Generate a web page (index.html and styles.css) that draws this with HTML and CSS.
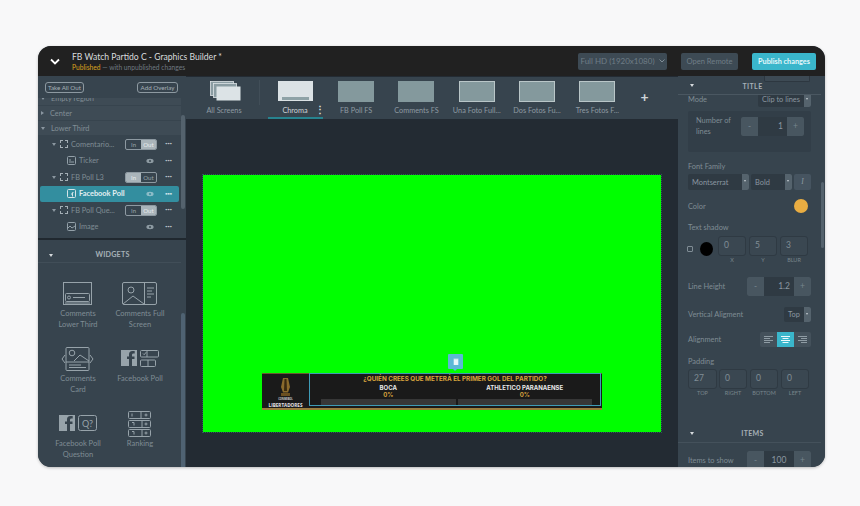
FILE: index.html
```html
<!DOCTYPE html>
<html lang="en">
<head>
<meta charset="utf-8">
<title>FB Watch Partido C - Graphics Builder</title>
<link rel="stylesheet" href="styles.css">
</head>
<body>
<div class="app">
  <header class="topbar">
    <svg class="chev" width="10" height="7" viewBox="0 0 10 7"><path d="M1 1.500l4 4 4-4" fill="none" stroke="#fff" stroke-width="1.800"/></svg>
    <div class="titles">
      <div class="doc-title">FB Watch Partido C - Graphics Builder *</div>
      <div class="doc-status"><b>Published</b> — with unpublished changes</div>
    </div>
    <div class="top-btn res">Full HD (1920x1080) <svg width="6" height="4" viewBox="0 0 6 4"><path d="M.5.5L3 3 5.500.5" fill="none" stroke="#7f8c95"/></svg></div>
    <div class="top-btn remote">Open Remote</div>
    <div class="top-btn publish">Publish changes</div>
  </header>
  <div class="main">
    <aside class="left">
      <div class="left-actions">
        <span class="ghost take">Take All Out</span>
        <span class="ghost add">Add Overlay</span>
      </div>
      <div class="tree-wrap">
        <div class="tree">
          <div class="region clipped"><i class="tri down"></i>Empty region</div>
          <div class="region"><i class="tri side"></i>Center</div>
          <div class="region"><i class="tri down"></i>Lower Third</div>
          <div class="row group"><i class="tri down"></i><i class="dash"></i><span class="name">Comentario...</span><span class="io"><span>In</span><span class="on">Out</span></span><span class="dots">•••</span></div>
          <div class="row child"><svg class="ico" width="9" height="9" viewBox="0 0 9 9"><rect x=".5" y=".5" width="8" height="8" rx="1" fill="none" stroke="#93a0a8"/><path d="M2 6h5M2 4h2" stroke="#93a0a8"/></svg><span class="name">Ticker</span><svg class="eye" width="8" height="6" viewBox="0 0 8 6"><ellipse cx="4" cy="3" rx="3.600" ry="2.200" fill="#8d9aa2"/><circle cx="4" cy="3" r="1" fill="#37444e"/></svg><span class="dots">•••</span></div>
          <div class="row group"><i class="tri down"></i><i class="dash"></i><span class="name">FB Poll L3</span><span class="io"><span class="on">In</span><span>Out</span></span><span class="dots">•••</span></div>
          <div class="row child selected"><svg class="ico" width="9" height="9" viewBox="0 0 9 9"><rect x=".5" y=".5" width="8" height="8" rx="1" fill="none" stroke="#d5e4e8"/><path d="M5.500 7.500V3.500h1M4 5h2" stroke="#d5e4e8" fill="none"/></svg><span class="name">Facebook Poll</span><svg class="eye" width="8" height="6" viewBox="0 0 8 6"><ellipse cx="4" cy="3" rx="3.600" ry="2.200" fill="#8cbcc8"/><circle cx="4" cy="3" r="1" fill="#338e9f"/></svg><span class="dots">•••</span></div>
          <div class="row group"><i class="tri down"></i><i class="dash"></i><span class="name">FB Poll Que...</span><span class="io"><span>In</span><span class="on">Out</span></span><span class="dots">•••</span></div>
          <div class="row child"><svg class="ico" width="9" height="9" viewBox="0 0 9 9"><rect x=".5" y=".5" width="8" height="8" rx="1" fill="none" stroke="#93a0a8"/><path d="M1 6l2-2 2 2 3-2" stroke="#93a0a8" fill="none"/></svg><span class="name">Image</span><svg class="eye" width="8" height="6" viewBox="0 0 8 6"><ellipse cx="4" cy="3" rx="3.600" ry="2.200" fill="#8d9aa2"/><circle cx="4" cy="3" r="1" fill="#37444e"/></svg><span class="dots">•••</span></div>
        </div>
        <div class="scroll tree-scroll"></div>
      </div>
      <div class="widgets">
        <div class="widgets-head"><i class="tri down white"></i><span>WIDGETS</span></div>
        <div class="widget-grid">
          <div class="widget">
            <svg width="30" height="24" viewBox="0 0 30 24" fill="none" stroke="#97a3aa"><rect x=".5" y=".5" width="28" height="22"/><rect x="2.500" y="11.500" width="24" height="8" rx="1"/><circle cx="6" cy="15.500" r="1.500"/><path d="M10 15.500h12M2 21h25"/></svg>
            <span>Comments<br>Lower Third</span>
          </div>
          <div class="widget">
            <svg width="36" height="24" viewBox="0 0 36 24" fill="none" stroke="#97a3aa"><rect x=".5" y=".5" width="34" height="22" rx="1.500"/><path d="M22.500.5v22M1 22l10-8 11 8M25 6h7M25 9h5M25 12h7M25 15h4"/><circle cx="9" cy="8" r="3"/></svg>
            <span>Comments Full<br>Screen</span>
          </div>
          <div class="widget">
            <svg width="36" height="24" viewBox="0 0 36 24" fill="none" stroke="#97a3aa"><rect x="6" y=".5" width="23" height="23" rx="1"/><circle cx="12" cy="6" r="2.800"/><path d="M14 14l6-6 9 6M6 15h23M9 18h12M9 20.500h17M5 8l-3 4 3 4M30 8l3 4-3 4"/></svg>
            <span>Comments<br>Card</span>
          </div>
          <div class="widget">
            <svg width="38" height="18" viewBox="0 0 38 18" fill="none" stroke="#97a3aa"><rect width="16" height="16" fill="#97a3aa" stroke="none"/><path d="M11 16V9h2.500V6.500H11V5c0-1 .5-1.500 1.500-1.500h1.200V1H11.500C9 1 8 2.500 8 4.500v2H6V9h2v7z" fill="#37444e" stroke="none"/><rect x="19.500" y=".5" width="18" height="6.500" rx="1"/><rect x="19.500" y="10" width="15" height="6.500" rx="1"/><path d="M26 .5v6.500M27 10v6.500M22 3.500l1.200 1.200 2-2.500"/></svg>
            <span>Facebook Poll</span>
          </div>
          <div class="widget">
            <svg width="38" height="18" viewBox="0 0 38 18" fill="none" stroke="#97a3aa"><rect width="16" height="16" fill="#97a3aa" stroke="none"/><path d="M11 16V9h2.500V6.500H11V5c0-1 .5-1.500 1.500-1.500h1.200V1H11.500C9 1 8 2.500 8 4.500v2H6V9h2v7z" fill="#37444e" stroke="none"/><rect x="19.500" y=".5" width="18" height="15" rx="2"/><text x="28.500" y="12" class="q">Q?</text></svg>
            <span>Facebook Poll<br>Question</span>
          </div>
          <div class="widget">
            <svg width="24" height="26" viewBox="0 0 24 26" fill="none" stroke="#97a3aa"><rect x=".5" y=".5" width="22" height="7" rx="1"/><rect x=".5" y="9.500" width="22" height="7" rx="1"/><rect x=".5" y="18.500" width="22" height="7" rx="1"/><path d="M13 .5v7M14 9.500v7M14 18.500v7M4 2.500v3M4 11.500h2v3M4 20.500h2v3"/><circle cx="18" cy="4" r="1"/><circle cx="18" cy="13" r="1"/><circle cx="18" cy="22" r="1"/></svg>
            <span>Ranking</span>
          </div>
        </div>
        <div class="scroll widgets-scroll"></div>
      </div>
    </aside>

    <section class="center">
      <nav class="tabs">
        <div class="tab all">
          <svg width="31" height="20" viewBox="0 0 31 20"><rect x=".5" y=".5" width="23" height="14" fill="#8a9ca2" stroke="#dce3e6" stroke-width=".8"/><rect x="3.500" y="2.500" width="23" height="14" fill="#8a9ca2" stroke="#dce3e6" stroke-width=".8"/><rect x="6.500" y="5.500" width="24" height="14" fill="#dce3e6"/></svg>
          <span>All Screens</span>
        </div>
        <i class="tab-sep"></i>
        <div class="tab active">
          <div class="thumb light"><i></i></div>
          <span>Chroma</span><em>⋮</em>
        </div>
        <div class="tab"><div class="thumb"></div><span>FB Poll FS</span></div>
        <div class="tab"><div class="thumb"></div><span>Comments FS</span></div>
        <div class="tab"><div class="thumb framed"></div><span>Una Foto Full...</span></div>
        <div class="tab"><div class="thumb framed"></div><span>Dos Fotos Fu...</span></div>
        <div class="tab"><div class="thumb framed"></div><span>Tres Fotos F...</span></div>
        <div class="plus">+</div>
      </nav>
      <div class="canvas">
        <div class="stage">
          <div class="trash"><svg width="6" height="7" viewBox="0 0 6 7"><path d="M.5 1h5M1 1.500h4V7H1z" fill="#e8f6fa" stroke="#e8f6fa" stroke-width=".6"/></svg></div>
          <div class="poll">
            <div class="poll-logo">
              <svg width="13" height="18" viewBox="0 0 13 18"><path d="M4 0h5l2 9-2 5.500H4L2 9z" fill="#8a6a2c"/><path d="M5.500 1h2L8 13H5z" fill="#3a2a10"/><path d="M2 15h9v3H2z" fill="#6b4f20"/></svg>
              <small>CONMEBOL</small>
              <strong>LIBERTADORES</strong>
            </div>
            <div class="poll-body">
              <div class="poll-q">¿QUIÉN CREES QUE METERÁ EL PRIMER GOL DEL PARTIDO?</div>
              <div class="poll-opts">
                <div class="opt"><b>BOCA</b><u>0%</u><i></i></div>
                <div class="opt"><b>ATHLETICO PARANAENSE</b><u>0%</u><i></i></div>
              </div>
            </div>
          </div>
        </div>
      </div>
    </section>

    <aside class="inspector">
      <div class="prop-head"><i class="stub"></i><i class="tri down white"></i><span>TITLE</span></div>
      <div class="props">
        <div class="line mode"><label>Mode</label><span class="select clip">Clip to lines<i></i></span></div>
        <div class="lines-box">
          <label>Number of<br>lines</label>
          <div class="stepper small"><span>-</span><b>1</b><span>+</span></div>
        </div>
        <label class="block ff">Font Family</label>
        <div class="font-row">
          <span class="select font">Montserrat<i></i></span>
          <span class="select weight">Bold<i></i></span>
          <span class="italic">I</span>
        </div>
        <div class="line color"><label>Color</label><i class="swatch"></i></div>
        <label class="block ts">Text shadow</label>
        <div class="shadow-row">
          <i class="check"></i><i class="black"></i>
          <div class="field"><b>0</b><small>X</small></div>
          <div class="field"><b>5</b><small>Y</small></div>
          <div class="field"><b>3</b><small>BLUR</small></div>
        </div>
        <div class="line lh"><label>Line Height</label><div class="stepper"><span>-</span><b>1.2</b><span>+</span></div></div>
        <div class="line va"><label>Vertical Aligment</label><span class="select top">Top<i></i></span></div>
        <div class="line al"><label>Alignment</label>
          <div class="aligns">
            <span><svg width="9" height="7" viewBox="0 0 9 7"><path d="M0 .5h9M0 2.500h6M0 4.500h9M0 6.500h6" stroke="#8f9ca4"/></svg></span>
            <span class="on"><svg width="9" height="7" viewBox="0 0 9 7"><path d="M0 .5h9M1.500 2.500h6M0 4.500h9M1.500 6.500h6" stroke="#eafafd"/></svg></span>
            <span><svg width="9" height="7" viewBox="0 0 9 7"><path d="M0 .5h9M3 2.500h6M0 4.500h9M3 6.500h6" stroke="#8f9ca4"/></svg></span>
          </div>
        </div>
        <label class="block pad">Padding</label>
        <div class="pad-row">
          <div class="field"><b>27</b><small>TOP</small></div>
          <div class="field"><b>0</b><small>RIGHT</small></div>
          <div class="field"><b>0</b><small>BOTTOM</small></div>
          <div class="field"><b>0</b><small>LEFT</small></div>
        </div>
        <div class="section-head"><i class="tri down white"></i><span>ITEMS</span></div>
        <div class="line items"><label>Items to show</label><div class="stepper"><span>-</span><b class="c">100</b><span>+</span></div></div>
      </div>
      <div class="scroll right-scroll"></div>
    </aside>
  </div>
</div>
</body>
</html>
```
FILE: styles.css
```css
* { box-sizing: border-box; }
html, body { margin: 0; height: 100%; }
body {
  background: #f8f8f9;
  padding: 46px 35px 39px 38px;
  font-family: Lato, "Open Sans", sans-serif;
  color: #8a969e;
  font-size: 7.400px;
  overflow: hidden;
}
i, em { display: block; font-style: normal; }
label { display: block; }

.app {
  width: 787px; height: 421px;
  border-radius: 13px; overflow: hidden;
  display: flex; flex-direction: column;
  background: #37444e;
  box-shadow: 0 1px 3px rgba(0,0,0,.25);
}

.topbar {
  height: 30px; flex: none;
  background: #212121;
  display: flex; align-items: center;
  padding: 0 9px 0 12px;
}
.chev { margin-right: 12px; }
.titles { flex: 1; }
.doc-title { color: #d9dcde; font-size: 8.600px; line-height: 11px; }
.doc-status { color: #6f7a82; font-size: 6.700px; line-height: 8px; }
.doc-status b { color: #d9a21f; font-weight: 400; }
.top-btn {
  height: 17px; border-radius: 2px;
  font-size: 8px; line-height: 17px; text-align: center;
  background: #3d4a54; color: #6f7d86;
}
.res { width: 89px; margin-right: 14px; }
.res svg { margin-left: 2px; vertical-align: 1px; }
.remote { width: 57px; margin-right: 14px; font-size: 7.600px; }
.publish { width: 64px; background: #3ab6cb; color: #e6f8fb; font-weight: 700; font-size: 7.300px; }

.main { flex: 1; min-height: 0; display: flex; }

/* left */
.left { width: 148px; flex: none; display: flex; flex-direction: column; background: #37444e; }
.left-actions { height: 22px; display: flex; justify-content: space-between; align-items: center; padding: 1px 8px 0 7px; flex: none; }
.ghost {
  border: 1px solid #8d99a1; border-radius: 3px;
  height: 11px; line-height: 9px; text-align: center;
  font-size: 6.200px; color: #a7b1b7;
}
.take { width: 39px; }
.add { width: 41px; }
.tree-wrap {
  height: 142px; flex: none; position: relative; overflow: hidden;
  border-bottom: 2px solid #20282f;
}
.tree { width: 143px; }
.region {
  height: 15px; padding-left: 3px;
  background: #3e4b55; border-bottom: 1px solid #37444e;
  display: flex; align-items: center; font-size: 7.400px; color: #818e96;
}
.region.clipped { margin-top: -7px; }
.tri { width: 0; height: 0; margin-right: 7px; flex: none; }
.tri.down { border: 2.500px solid transparent; border-top: 3px solid #8a96a0; border-bottom: 0; }
.tri.side { border: 2.500px solid transparent; border-left: 3px solid #8a96a0; border-right: 0; }
.tri.white { border-top-color: #d5dadd; }
.region .tri { margin-right: 6px; }
.row { display: flex; align-items: center; font-size: 7.400px; color: #7f8c94; height: 16.500px; }
.row.group { padding-left: 14px; }
.row.group .tri { margin-right: 4px; }
.row.child { padding-left: 27px; margin: 0 2px; border-radius: 2px; }
.row .name { flex: 1; white-space: nowrap; }
.row.child .name { margin-left: 3px; }
.dash { width: 8px; height: 8px; border: 1px dashed #a4afb6; margin-right: 3px; flex: none; }
.io {
  display: flex; width: 32px; height: 11px; border: 1px solid #8d99a1; border-radius: 2px;
  font-size: 6px; line-height: 9px; text-align: center; overflow: hidden; margin-right: 8px; color: #9aa6ad;
}
.io span { flex: 1; }
.io .on { background: #a9b4ba; color: #e8ecee; }
.dots { font-size: 4.500px; color: #b6bfc4; letter-spacing: -.4px; width: 9px; margin-right: 7px; line-height: 6px; }
.row.child .dots { margin-right: 5px; }
.eye { margin-right: 11px; }
.row.selected { background: #338e9f; color: #e3f0f3; font-weight: 700; }
.row.selected .dots { color: #cfe4ea; }
.ico { flex: none; }
.scroll { position: absolute; background: #54626d; border-radius: 2px; width: 4px; }
.tree-scroll { right: 1px; top: 17px; height: 94px; }

.widgets { flex: 1; min-height: 0; position: relative; overflow: hidden; padding-top: 10px; }
.widgets-head {
  height: 13px; width: 143px; padding-left: 11px;
  border-bottom: 1px solid #414e58;
  display: flex; align-items: flex-start; line-height: 10px;
  font-size: 7.200px; font-weight: 700; color: #a6b0b6; letter-spacing: .2px;
}
.widgets-head .tri { margin-top: 4px; margin-right: 0; }
.widgets-head span { flex: 1; text-align: center; padding-right: 9px; }
.widget-grid { display: grid; grid-template-columns: 62px 62px; grid-auto-rows: 65px; margin: 18px 0 0 9px; }
.widget { display: flex; flex-direction: column; align-items: center; text-align: center; font-size: 7.500px; line-height: 10.500px; color: #7f8c94; }
.widget svg { height: 26px; margin-bottom: 2px; flex: none; }
.q { font: 9px Lato, sans-serif; fill: #97a3aa; stroke: none; text-anchor: middle; }
.widgets-scroll { right: 1px; top: 73px; height: 160px; background: #4f6272; }

/* center */
.center { flex: 1; min-width: 0; display: flex; flex-direction: column; background: #232b33; }
.tabs {
  height: 42px; flex: none; background: #37444e; margin-top: 1px;
  display: flex; font-size: 7.300px; color: #8e9aa2; padding-left: 15px;
}
.tab { width: 60.300px; position: relative; display: flex; flex-direction: column; align-items: center; padding-top: 4px; }
.tab span { position: absolute; top: 29px; left: 0; right: 0; text-align: center; white-space: nowrap; }
.tab.all { width: 46px; }
.tab.all svg { margin-left: 2px; }
.tab-sep { width: 1px; height: 25px; background: #414e58; margin: 3px 8px 0 12px; flex: none; }
.tab.active { width: 55px; margin-right: 3px; border-bottom: 2px solid #27838f; color: #cfd5d9; }
.tab.active span { left: 0; right: 1px; }
.tab.active em { position: absolute; right: -2px; top: 27px; font-size: 10px; line-height: 11px; font-weight: 700; color: #d5dadd; }
.thumb { width: 36px; height: 21px; background: #84999d; }
.thumb.framed { border: 1px solid #b9c6c8; }
.thumb.light { width: 35px; height: 20px; background: #dbe2e5; position: relative; }
.thumb.light i { position: absolute; left: 4px; right: 4px; bottom: 1px; height: 3px; background: #8ea2a6; }
.plus { color: #cfd5d9; font-size: 14px; font-weight: 700; margin-left: 13px; line-height: 40px; }
.canvas { flex: 1; padding: 56px 0 0 17px; }
.stage {
  width: 458px; height: 257px; background: #00ff00; position: relative;
  outline: 1px dotted #2f5a5a;
}
.trash {
  position: absolute; left: 245px; top: 179px; width: 15px; height: 15px;
  background: #5cb8d6; border-radius: 1px;
  display: flex; align-items: center; justify-content: center;
}
.trash::after {
  content: ""; position: absolute; left: 5px; bottom: -2px; border: 2.500px solid transparent;
  border-top: 2px solid #5cb8d6; border-bottom: 0;
}
.poll {
  position: absolute; left: 59px; top: 198px; width: 340px; height: 37px;
  background: #1a1a1a; display: flex;
  border-bottom: 2px solid #9a7f3c; border-top: 1px solid #6b5a30;
}
.poll-logo { width: 47px; display: flex; flex-direction: column; align-items: center; padding-top: 4px; flex: none; line-height: 1; }
.poll-logo small { font: 700 2.500px "Open Sans", sans-serif; color: #cfcfcf; margin-top: 1px; }
.poll-logo strong { font: 700 4.600px "Open Sans", sans-serif; color: #e6e6e6; margin-top: 1px; }
.poll-body {
  flex: 1; margin: -1px 1px 2px 0; outline: 1px solid #3e9bb6; outline-offset: -1px; padding: 2px 9px 0;
  display: flex; flex-direction: column; align-items: stretch;
}
.poll-q { font: 700 6.300px/9px Inter, "Open Sans", sans-serif; color: #d9a53e; text-align: center; white-space: nowrap; }
.poll-opts { display: flex; gap: 2px; padding: 0 0 0 3px; margin-top: 1px; }
.opt { flex: 1; display: flex; flex-direction: column; align-items: center; font-family: Inter, "Open Sans", sans-serif; font-size: 6px; line-height: 6.500px; }
.opt b { color: #e8e8e8; }
.opt u { text-decoration: none; font-weight: 700; color: #d9a53e; }
.opt i { width: 100%; height: 6px; background: #373737; margin-top: 1px; }

/* inspector */
.inspector { width: 147px; flex: none; position: relative; overflow: hidden; background: #37444e; display: flex; flex-direction: column; }
.prop-head {
  height: 19px; flex: none; position: relative; z-index: 1; width: 143px;
  background: #37444e; border-bottom: 1px solid #4a5761;
  display: flex; align-items: flex-end; padding: 0 0 3px 12px;
  font-size: 7px; font-weight: 700; color: #a6b0b6; line-height: 10px; letter-spacing: .4px;
}
.prop-head .tri { margin: 0 0 4px 0; }
.prop-head span { flex: 1; text-align: center; padding-right: 10px; }
.stub { position: absolute; right: 11px; top: 0; width: 46px; height: 6px; border: 1px solid #2d3740; border-top: 0; border-radius: 0 0 2px 2px; background: #3d4a54; }
.props { padding: 0 14px 0 10px; flex: 1; min-height: 0; font-size: 7.400px; color: #7f8c94; }
.line { display: flex; justify-content: space-between; align-items: center; width: 123px; }
.select {
  display: flex; align-items: center; justify-content: space-between;
  background: #2f3a43; border-radius: 2px; color: #8a96a0; font-size: 7.400px; padding-left: 4px; height: 15px;
}
.select i { width: 7px; height: 15px; background: #55636d; position: relative; flex: none; border-radius: 0 2px 2px 0; }
.select i::after { content: ""; position: absolute; left: 2px; top: 6px; border: 1.500px solid transparent; border-top: 2px solid #c5cdd2; border-bottom: 0; }
.mode { height: 14px; margin-top: -3px; }
.clip { width: 53px; }
.lines-box {
  height: 41px; margin-top: 5px; background: #323e48; border-radius: 2px; padding: 5px 7px 0 8px;
  display: flex; justify-content: space-between; line-height: 10.500px; width: 123px;
}
.stepper {
  display: flex; width: 64px; height: 19px; border-radius: 2px; background: #2f3a43; overflow: hidden;
  font-size: 8.500px; line-height: 19px; text-align: center;
}
.stepper span { width: 17px; background: #485660; color: #76848d; flex: none; }
.stepper b { flex: 1; font-weight: 400; color: #8a96a0; text-align: right; padding-right: 4px; }
.stepper b.c { text-align: center; padding: 0; }
.stepper.small { margin-top: 1px; width: 63px; }
.block { line-height: 10px; }
.ff { margin-top: 10px; }
.font-row { display: flex; gap: 2px; margin-top: 2px; width: 123px; }
.font-row .select { height: 16px; }
.font-row .select i { height: 16px; }
.font { width: 61px; }
.weight { width: 41px; }
.italic { width: 17px; height: 16px; background: #465460; border-radius: 2px; color: #8f9ba3; font-style: italic; font-family: "Liberation Serif", serif; text-align: center; line-height: 16px; }
.color { margin-top: 9px; height: 14px; padding-right: 3px; }
.swatch { width: 14px; height: 14px; border-radius: 50%; background: #e9ad42; }
.ts { margin-top: 10px; }
.shadow-row { display: flex; align-items: flex-start; margin-top: 3px; }
.check { width: 6px; height: 6px; border: 1px solid #7f8c94; border-radius: 1px; margin: 10px 7px 0 -1px; }
.black { width: 14px; height: 14px; border-radius: 50%; background: #000; margin: 6px 5px 0 0; }
.field { width: 28px; margin-right: 3px; flex: none; }
.field b { display: block; height: 20px; border: 1px solid #2f3a43; border-radius: 3px; background: #3a4751; font-weight: 400; font-size: 8.500px; line-height: 16px; padding-left: 5px; color: #818e96; }
.field small { display: block; text-align: center; font-size: 5.500px; line-height: 9px; color: #77848c; }
.lh { margin-top: 12px; height: 19px; }
.va { margin-top: 11px; height: 15px; }
.top { width: 27px; }
.al { margin-top: 10px; height: 15px; }
.aligns { display: flex; width: 51px; height: 15px; background: #44515b; border-radius: 2px; overflow: hidden; }
.aligns span { flex: 1; display: flex; align-items: center; justify-content: center; }
.aligns .on { background: #3ab6cb; }
.pad { margin-top: 10px; }
.pad-row { display: flex; margin-top: 2px; }
.pad-row .field:first-child { width: 29px; margin-right: 2px; }
.section-head {
  height: 15px; margin: 30px 0 0 -10px; width: 143px; border-bottom: 1px solid #44515b; padding-left: 12px;
  display: flex; align-items: flex-start; line-height: 10px;
  font-size: 7px; font-weight: 700; color: #a6b0b6; letter-spacing: .3px;
}
.section-head .tri { margin: 4px 0 0 0; }
.section-head span { flex: 1; text-align: center; padding-right: 10px; }
.items { margin-top: 8px; height: 19px; }
.right-scroll { right: 1px; top: 106px; height: 66px; width: 3px; }
```
